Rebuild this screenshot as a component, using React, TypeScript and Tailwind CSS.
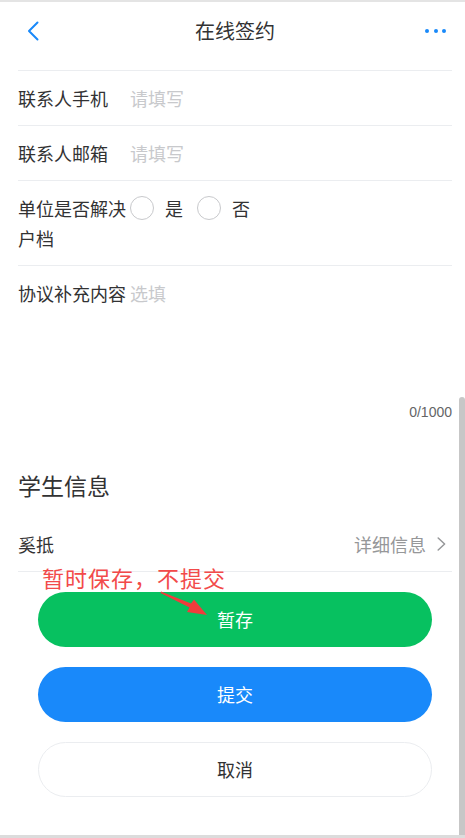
import React from "react";

const font = { fontFamily: '"Noto Sans CJK SC", "Noto Sans", sans-serif' };

function Radio({ label }: { label: string }) {
  return (
    <div className="flex items-center">
      <span className="w-[24px] h-[24px] rounded-full border border-[#c8c9cc] bg-white" />
      <span className="ml-[11px] text-[18px] leading-[30px] text-[#323233]">{label}</span>
    </div>
  );
}

export default function App() {
  return (
    <div
      className="w-[465px] h-[838px] flex flex-col overflow-hidden bg-white text-[#323233]"
      style={font}
    >
      <div className="h-[2px] bg-[#e4e4e4]" />
      <div className="flex flex-1 min-h-0">
        <div className="flex-1 relative flex flex-col">
          {/* header */}
          <div className="h-[58px] flex items-center">
            <div className="w-[71px] pl-[27px] flex items-center">
              <svg width="12" height="20" viewBox="0 0 12 20" fill="none">
                <path d="M10.5 1.5 L2 10 L10.5 18.5" stroke="#1989fa" strokeWidth="2" strokeLinecap="round" strokeLinejoin="round" />
              </svg>
            </div>
            <div className="flex-1 text-center text-[20px] leading-[30px] text-[#323233]">在线签约</div>
            <div className="w-[60px] pr-[13px] flex items-center justify-end gap-[4.5px]">
              <span className="w-[4px] h-[4px] rounded-full bg-[#1989fa]" />
              <span className="w-[4px] h-[4px] rounded-full bg-[#1989fa]" />
              <span className="w-[4px] h-[4px] rounded-full bg-[#1989fa]" />
            </div>
          </div>
          <div className="h-[10px]" />
          <div className="ml-[18px] mr-[7px] flex flex-col">
            <div className="h-px bg-[#ebedf0]" />
            <div className="flex py-[12px] border-b border-[#ebedf0] text-[18px] leading-[30px]">
              <div className="w-[112px] shrink-0">联系人手机</div>
              <div className="text-[#c8c9cc]">请填写</div>
            </div>
            <div className="flex py-[12px] border-b border-[#ebedf0] text-[18px] leading-[30px]">
              <div className="w-[112px] shrink-0">联系人邮箱</div>
              <div className="text-[#c8c9cc]">请填写</div>
            </div>
            <div className="flex py-[12px] border-b border-[#ebedf0] text-[18px] leading-[30px]">
              <div className="w-[112px] shrink-0">单位是否解决户档</div>
              <div className="flex h-[30px] items-center gap-[14px]">
                <Radio label="是" />
                <Radio label="否" />
              </div>
            </div>
            <div className="flex pt-[12px] pb-[12px] text-[18px] leading-[30px]">
              <div className="w-[112px] shrink-0">协议补充内容</div>
              <div className="flex-1 flex flex-col">
                <div className="h-[120px] text-[#c8c9cc]">选填</div>
                <div
                  className="mt-[4px] text-right text-[14px] leading-[20px] text-[#646566]"
                  style={{ fontFamily: '"Liberation Sans", Arial, sans-serif' }}
                >
                  0/1000
                </div>
              </div>
            </div>
            <div className="pt-[36px] pb-[17px] text-[23px] leading-[30px] text-[#323233]">学生信息</div>
            <div className="flex items-center justify-between py-[12px] border-b border-[#ebedf0] text-[18px] leading-[30px]">
              <div>奚抵</div>
              <div className="flex items-center text-[#969799]">
                <span>详细信息</span>
                <svg className="ml-[11px] mr-[6px]" width="9" height="14" viewBox="0 0 9 14" fill="none">
                  <path d="M1.2 1 L7.6 7 L1.2 13" stroke="#969799" strokeWidth="1.5" strokeLinecap="round" strokeLinejoin="round" />
                </svg>
              </div>
            </div>
          </div>
          {/* buttons */}
          <div className="ml-[38px] mr-[27px] mt-[20px] flex flex-col gap-[20px]">
            <div className="h-[55px] rounded-full bg-[#07c160] flex items-center justify-center text-white text-[18px]">暂存</div>
            <div className="h-[55px] rounded-full bg-[#1989fa] flex items-center justify-center text-white text-[18px]">提交</div>
            <div className="h-[55px] rounded-full bg-white border border-[#ebedf0] flex items-center justify-center text-[#323233] text-[18px]">取消</div>
          </div>
          {/* annotation */}
          <div className="absolute left-[42px] top-[561px] text-[22px] leading-[28px] text-[#f24a4a] tracking-[1px]">
            暂时保存，不提交
          </div>
          <svg className="absolute left-0 top-0" width="459" height="833" viewBox="0 2 459 833" fill="none" style={{ pointerEvents: "none" }}>
            <polygon points="161,591.5 191,603.5 194,599.5 207,615 187,612 189.5,607.5 160.5,593" fill="#f03c3c" />
          </svg>
        </div>
        <div className="w-[6px] flex flex-col">
          <div className="h-[395px]" />
          <div className="flex-1 bg-[#c7c7c7] rounded-t-[3px]" />
        </div>
      </div>
      <div className="h-[3px] bg-[#dcdcdc]" />
    </div>
  );
}
